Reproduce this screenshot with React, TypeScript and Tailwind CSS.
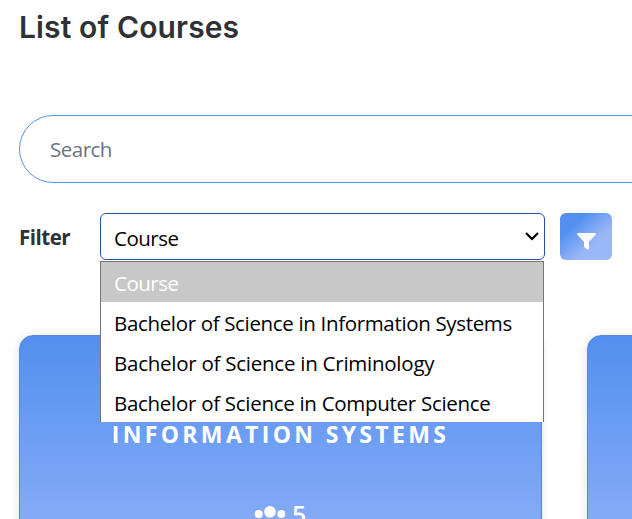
const courses = [
  { name: 'Bachelor of Science in Information Systems', spacing: 'tracking-[-0.34px]' },
  { name: 'Bachelor of Science in Criminology', spacing: 'tracking-[-0.25px]' },
  { name: 'Bachelor of Science in Computer Science', spacing: 'tracking-[-0.29px]' },
];

function Funnel() {
  return (
    <svg className="mt-[10px] h-[17px] w-[19px]" viewBox="0 0 19 17" fill="#fff">
      <path d="M1 0H18Q19.6 0.8 18.4 2L12 8.7V15.5Q11.6 17 10 16.3L7.4 14.2Q7 13.8 7 13V8.7L0.6 2Q-.6 .8 1 0Z" />
    </svg>
  );
}

function Card({ title, count }: { title?: string; count?: number }) {
  return (
    <article className="flex h-[260px] w-[523px] shrink-0 flex-col items-center rounded-[14px] border border-[#5c86cf] bg-linear-to-b from-[#528ff0] to-[#97b5f8] pt-[82px] text-white shadow-[0_2px_10px_rgba(0,0,0,0.13)]">
      {title && <h2 className="whitespace-nowrap text-[23px] leading-8 font-bold tracking-[3.33px]">{title}</h2>}
      {count && (
        <div className="mt-12 flex w-full items-start pl-[234px]">
          <svg className="mt-[8px] h-8 w-[32px]" viewBox="0 0 32 32" fill="#fff">
            <circle cx="4.7" cy="8" r="4" />
            <circle cx="16" cy="5.8" r="5.8" />
            <circle cx="27.3" cy="8" r="4" />
            <path d="M0 22Q0 14 7 14L10 15Q7 18 7 23H0ZM8 26Q8 14 16 14T24 26ZM25 23Q25 18 22 15Q32 11 32 23Z" />
          </svg>
          <span className="ml-[6px] text-[25px] leading-8 font-semibold">{count}</span>
        </div>
      )}
    </article>
  );
}

export default function App() {
  return (
    <main className="h-[519px] w-[632px] overflow-hidden bg-white pl-[19px] font-['Open_Sans',sans-serif] text-[#303133]">
      <h1 className="h-[115px] pt-[9px] font-[Inter,sans-serif] text-[30px] leading-9 font-semibold tracking-[0.13px]">List of Courses</h1>
      <div className="flex h-[68px] w-[900px] items-center rounded-full border border-[#5991e9] pt-px pl-[30px] text-[20.5px] text-[#687588]">
        <span className="tracking-[-0.5px]">Search</span>
      </div>
      <div className="mt-[30px] flex h-[47px] items-center">
        <strong className="w-[81px] pt-px text-[20.5px] font-bold tracking-[-0.5px]">Filter</strong>
        <div className="relative h-[47px] w-[445px]">
          <div className="flex h-full items-center justify-between rounded-[6px] border border-[#2850b0] pt-[3px] pr-[5px] pl-[13px] text-[20.5px] text-black">
            <span className="tracking-[-0.5px]">Course</span>
            <svg className="mb-1 h-[9px] w-[14px]" viewBox="0 0 14 9" fill="none" stroke="#000" strokeWidth="2.2">
              <path d="M1 1L7 7L13 1" />
            </svg>
          </div>
          <ul className="absolute top-12 left-0 z-10 h-[161px] w-[444px] border-x border-t border-[#767676] bg-white text-[20.5px] leading-10 text-black">
            <li className="h-10 bg-[#c8c8c8] pt-px pl-[13px] text-white"><span className="tracking-[-0.5px]">Course</span></li>
            {courses.map((c) => (
              <li key={c.name} className="h-10 whitespace-nowrap pt-px pl-[13px]"><span className={c.spacing}>{c.name}</span></li>
            ))}
          </ul>
        </div>
        <button className="ml-[15px] flex h-[47px] w-[52px] items-center justify-center rounded-[6px] bg-linear-to-br from-[#528ff0] from-25% to-[#9ab7f7] to-65%"><Funnel /></button>
      </div>
      <section className="mt-[75px] flex gap-[45px]">
        <Card title="INFORMATION SYSTEMS" count={5} />
        <Card />
      </section>
    </main>
  );
}
